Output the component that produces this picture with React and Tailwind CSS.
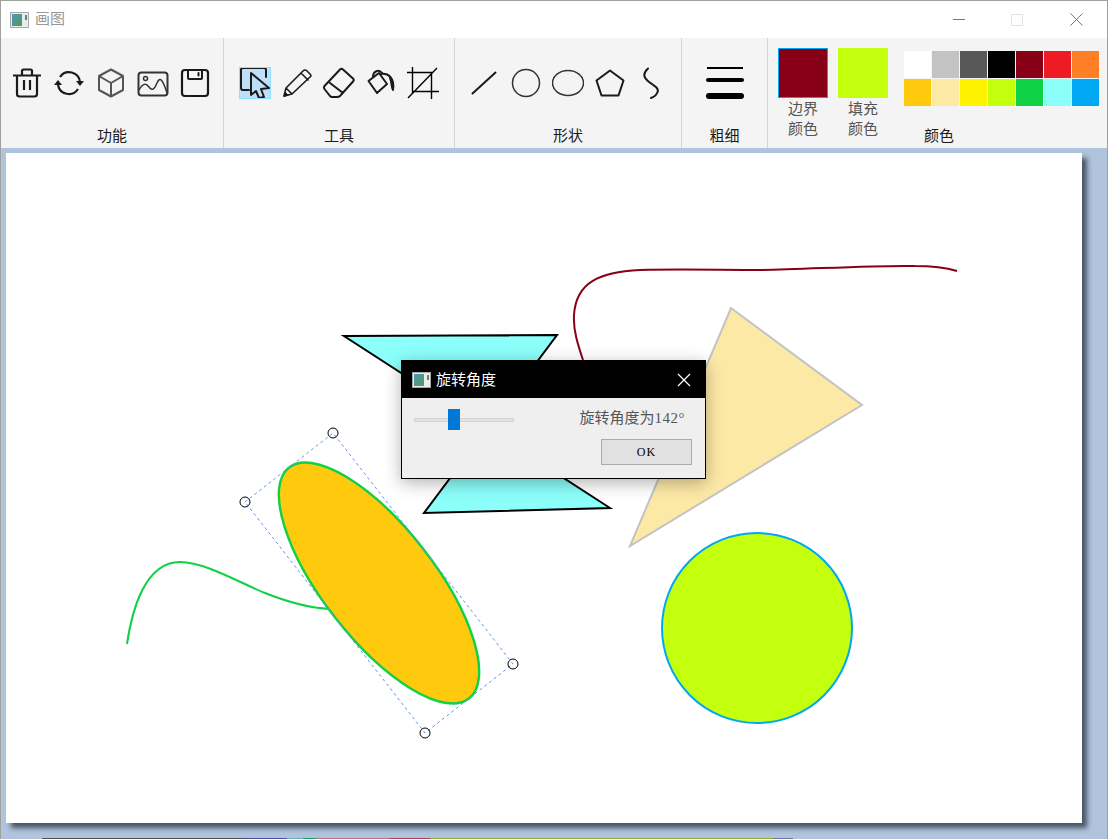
const cjk = "font-['Noto_Sans_CJK_SC',sans-serif]";
const serifCjk = "font-['Liberation_Serif','Noto_Sans_CJK_SC',serif]";

const paletteColors = [
  "bg-white", "bg-[#c3c3c3]", "bg-[#585858]", "bg-black", "bg-[#880015]", "bg-[#ed1c24]", "bg-[#ff7f27]",
  "bg-[#ffc90e]", "bg-[#fde9a6]", "bg-[#fff200]", "bg-[#c4ff0e]", "bg-[#0ed145]", "bg-[#8cfffb]", "bg-[#00a8f3]",
];

const desktopStrip = [
  ["w-[41px]", "bg-[#b0c4de]"],
  ["w-[203px]", "bg-[#4c4f58]"],
  ["w-[42px]", "bg-[#4552a0]"],
  ["w-[16px]", "bg-[#6fb0b4]"],
  ["w-[13px]", "bg-[#1f9d62]"],
  ["w-[74px]", "bg-[#b0708c]"],
  ["w-[40px]", "bg-[#b83550]"],
  ["w-[343px]", "bg-[#8cae2c]"],
  ["w-[20px]", "bg-[#6a7a98]"],
  ["flex-1", "bg-[#b0c4de]"],
];

function Icon({ children }) {
  return (
    <svg width="32" height="32" viewBox="0 0 32 32" fill="none" stroke="#1a1a1a" strokeWidth="2" strokeLinecap="round" strokeLinejoin="round" className="block shrink-0">
      {children}
    </svg>
  );
}

function AppIcon({ id }) {
  return (
    <svg width="19" height="16" viewBox="0 0 19 16" className="block shrink-0">
      <defs>
        <linearGradient id={id} x1="0" y1="0" x2="1" y2="1">
          <stop offset="0" stopColor="#4f97b8" />
          <stop offset="1" stopColor="#4f9a5e" />
        </linearGradient>
      </defs>
      <rect x="0.5" y="0.5" width="18" height="15" fill="#ececec" stroke="#a8a8a8" />
      <rect x="2" y="2" width="10" height="12" fill={`url(#${id})`} />
      <rect x="15" y="3" width="2" height="5" fill="#4f8f78" />
    </svg>
  );
}

function Section({ width, label, pad, children }) {
  return (
    <div className={`${width} shrink-0 border-r border-[#d4d4d4] pt-[29px] flex flex-col`}>
      <div className={`flex gap-[10px] h-8 ${pad}`}>{children}</div>
      <div className="mt-[26px] h-5 leading-5 text-[15px] text-[#1a1a1a] text-center">{label}</div>
    </div>
  );
}

function Swatch({ color, active, lines }) {
  return (
    <div className="w-[50px] flex flex-col items-center">
      <div className={`w-[50px] h-[50px] ${color} ${active ? "border border-[#00a8f3]" : ""}`}></div>
      <div className="text-[15px] leading-5 text-[#555] text-center">
        <div>{lines[0]}</div>
        <div>{lines[1]}</div>
      </div>
    </div>
  );
}

function Drawing() {
  return (
    <svg width="1076" height="670" viewBox="6 153 1076 670" fill="none" className="block">
      <path d="M583 360 C578 345 573 330 574 315 C576 282 600 272 640 270 C680 269 720 270 760 270 C810 269 880 265 915 266 C935 266 947 268 957 271" stroke="#880015" strokeWidth="2" />
      <polygon points="344,336 557,335 424,513 610,508" fill="#8cfffb" stroke="#000" strokeWidth="2" />
      <polygon points="731,308 862,405 630,546" fill="#fde9a6" stroke="#c3c3c3" strokeWidth="2" />
      <circle cx="757" cy="628" r="95" fill="#c4ff0e" stroke="#00a8f3" strokeWidth="2" />
      <path d="M127 644 C132 610 145 562 180 562 C205 562 240 583 265 593 C290 603 310 608 330 609" stroke="#0ed145" strokeWidth="2" />
      <ellipse cx="379" cy="583" rx="146.4" ry="55.9" transform="rotate(52.1 379 583)" fill="#ffc90e" stroke="#0ed145" strokeWidth="2.4" />
      <polygon points="245,502 333,433 513,664 425,733" stroke="#6495ed" strokeWidth="1" strokeDasharray="3 3" />
      <circle cx="245" cy="502" r="5" stroke="#000" />
      <circle cx="333" cy="433" r="5" stroke="#000" />
      <circle cx="513" cy="664" r="5" stroke="#000" />
      <circle cx="425" cy="733" r="5" stroke="#000" />
    </svg>
  );
}

function RotateDialog() {
  return (
    <div className="absolute left-[395px] top-[207px] w-[305px] h-[119px] border border-black bg-[#efefef] shadow-[0_4px_16px_rgba(0,0,0,0.3)] flex flex-col">
      <div className="h-[37px] bg-black flex items-center pl-[10px] pr-[14px]">
        <AppIcon id="dialogIcon" />
        <span className={`ml-[5px] text-[15px] text-white ${cjk}`}>旋转角度</span>
        <svg width="14" height="14" viewBox="0 0 14 14" className="block ml-auto" stroke="#fff" strokeWidth="1.2">
          <path d="M1 1 L13 13 M13 1 L1 13" />
        </svg>
      </div>
      <div className="flex-1">
        <div className="flex items-center pl-3 pr-5 pt-[3px] h-[41px]">
          <div className="relative w-[100px] h-1 bg-[#e3e3e3] border border-[#d4d4d4]">
            <div className="absolute left-[33px] -top-[10px] w-3 h-[21px] bg-[#0078d7]"></div>
          </div>
          <span className={`ml-auto mb-1 text-[15px] text-[#555] ${serifCjk}`}>
            旋转角度为<span className="tracking-[0.5px]">142°</span>
          </span>
        </div>
        <div className="flex justify-end pr-[13px]">
          <div className={`w-[91px] h-[26px] bg-[#e1e1e1] border border-[#adadad] flex items-center justify-center text-xs tracking-[1px] text-black ${serifCjk}`}>OK</div>
        </div>
      </div>
    </div>
  );
}

export default function App() {
  return (
    <div className={`w-[1108px] h-[839px] border-x border-t border-[#a0a0a0] flex flex-col overflow-hidden bg-white ${cjk}`}>
      {/* title bar */}
      <div className="h-[37px] shrink-0 bg-white flex items-center pl-[9px]">
        <AppIcon id="titleIcon" />
        <span className="ml-[6px] mb-[3px] text-[15px] text-[#999]">画图</span>
        <div className="ml-auto flex items-center">
          <div className="w-3 h-px bg-[#777]"></div>
          <div className="ml-[46px] w-3 h-3 border border-[#e2e2e2]"></div>
          <svg width="13" height="13" viewBox="0 0 13 13" className="block ml-[47px] mr-6" stroke="#777" strokeWidth="1">
            <path d="M0.5 0.5 L12.5 12.5 M12.5 0.5 L0.5 12.5" />
          </svg>
        </div>
      </div>

      {/* ribbon */}
      <div className="h-[110px] shrink-0 bg-[#f4f4f4] flex">
        <Section width="w-[223px]" pad="pl-[10px]" label="功能">
          <Icon>
            <path d="M2 8.5 H30 M11 8 V4 Q11 2.5 12.5 2.5 H19.5 Q21 2.5 21 4 V8 M6 9 V27 Q6 29.5 8.5 29.5 H23.5 Q26 29.5 26 27 V9 M13 13 V23 M19 13 V23" strokeWidth="2.2" strokeLinecap="butt" />
          </Icon>
          <Icon>
            <path d="M27 15 A11 11 0 0 0 7 10 M5 18 A11 11 0 0 0 25 22" strokeLinecap="butt" strokeWidth="2.2" />
            <polygon points="23,14 31,14 27,19" fill="#1a1a1a" stroke="none" />
            <polygon points="1,18 9,18 5,13" fill="#1a1a1a" stroke="none" />
          </Icon>
          <Icon>
            <path d="M16 2.5 L28 9 V23 L16 29.5 L4 23 V9 Z M4 9 L16 16 L28 9 M16 16 V29.5" stroke="#555" />
          </Icon>
          <Icon>
            <rect x="1.5" y="5.5" width="29" height="23" rx="3" stroke="#333" />
            <circle cx="8.5" cy="11.5" r="2" stroke="#333" strokeWidth="1.5" />
            <path d="M2 23 C6 16 9 16 12 20 S17 23 20 16 S26 13 30 26" stroke="#333" strokeWidth="1.5" />
          </Icon>
          <Icon>
            <rect x="3" y="3" width="26" height="26" rx="3" strokeWidth="2.2" />
            <path d="M9 3 V11 Q9 12 10 12 H22 Q23 12 23 11 V3 M19.5 6 V8.5" />
          </Icon>
        </Section>

        <Section width="w-[231px]" pad="pl-[15px]" label="工具">
          <div className="w-8 h-8 bg-[#bfdff6] outline outline-1 -outline-offset-1 outline-[#8fe0ff]">
            <Icon>
              <path d="M10 23 H4 Q2 23 2 21 V3 Q2 1 4 1 H25 Q27 1 27 3 V10" />
              <polygon points="12,6 30,21 22,22 25,30 20,31 17,24 12,28" fill="#bfdff6" />
            </Icon>
          </div>
          <Icon>
            <path d="M3 29 L5 21 L22 4 Q24 2 26 4 L29 7 Q31 9 29 10 L11 27 Z M20 6 L27 13 M5 21 L11 27" strokeWidth="1.6" />
            <path d="M3 29 L4 25 L7 28 Z" fill="#1a1a1a" strokeWidth="1" />
          </Icon>
          <Icon>
            <path d="M17 2.5 Q18.5 1 20 2.5 L30 11.5 Q31.5 13 30 14.5 L17 29 Q16 30 14 30 H9 Q8 30 7 29 L1.5 22 Q0.5 20.5 1.5 19 Z M7 16 L20 26" />
          </Icon>
          <Icon>
            <path d="M3.5 14 L14 6 L22 17 L12 26 Z M8 10 C8 4 14 2 17 6 M16 7 C24 6 29 11 28 22" />
            <path d="M25 11 C28 14 29 18 28 23 C26 20 27 15 25 11 Z" fill="#1a1a1a" />
          </Icon>
          <Icon>
            <path d="M5.5 0 V26 M0 5.5 H26 M24.5 5.5 V32 M5.5 24.5 H32 M1 31 L30 1" strokeWidth="1.4" stroke="#000" strokeLinecap="butt" />
          </Icon>
        </Section>

        <Section width="w-[227px]" pad="pl-[13px]" label="形状">
          <Icon>
            <path d="M4.5 26.5 L27.5 5.5" />
          </Icon>
          <Icon>
            <circle cx="16" cy="16" r="13.5" stroke="#333" strokeWidth="1.5" />
          </Icon>
          <Icon>
            <ellipse cx="16" cy="16" rx="15.5" ry="12.5" stroke="#333" strokeWidth="1.5" />
          </Icon>
          <Icon>
            <polygon points="16,3.5 29.5,13.5 24.5,28.5 7.5,28.5 2.5,13.5" />
          </Icon>
          <Icon>
            <path d="M12 1.5 C6 7 8 11 13 15 C19 19 24 22 21 26 C20 29 18 30 15 31" />
          </Icon>
        </Section>

        <Section width="w-[86px]" pad="pl-[24px]" label="粗细">
          <svg width="38" height="32" viewBox="0 0 38 32" stroke="#000" strokeLinecap="round" className="block shrink-0">
            <path d="M1 1 H37" strokeWidth="2" strokeLinecap="butt" />
            <path d="M2 13 H36" strokeWidth="4" />
            <path d="M3 29 H35" strokeWidth="6" />
          </svg>
        </Section>

        <div className="flex-1 flex pl-[10px] pt-[10px]">
          <div className="flex gap-[10px]">
            <Swatch color="bg-[#880015]" active lines={["边界", "颜色"]} />
            <Swatch color="bg-[#c4ff0e]" lines={["填充", "颜色"]} />
          </div>
          <div className="ml-4 pt-[3px] flex flex-col">
            <div className="grid grid-cols-[repeat(7,27px)] grid-rows-[repeat(2,27px)] gap-px">
              {paletteColors.map((c, i) => (
                <div key={i} className={c}></div>
              ))}
            </div>
            <div className="mt-[19px] w-[70px] h-5 leading-5 text-[15px] text-[#1a1a1a] text-center">颜色</div>
          </div>
        </div>
      </div>

      {/* canvas */}
      <div className="flex-1 bg-[#b0c4de] pl-[5px] pt-[5px]">
        <div className="relative w-[1076px] h-[670px] bg-white shadow-[5px_5px_5px_rgba(40,45,60,0.75)]">
          <Drawing />
          <RotateDialog />
        </div>
      </div>

      {/* desktop showing through under the window */}
      <div className="h-px shrink-0 flex">
        {desktopStrip.map(([w, c], i) => (
          <div key={i} className={`${w} ${c}`}></div>
        ))}
      </div>
    </div>
  );
}
